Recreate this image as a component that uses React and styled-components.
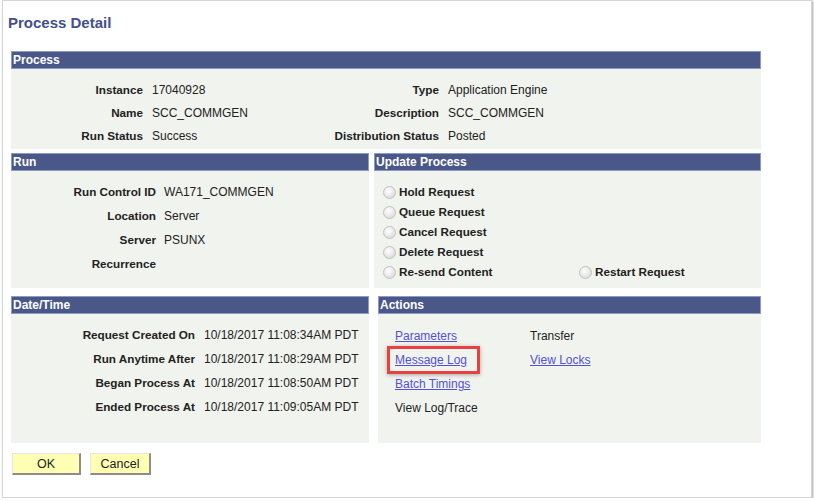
import React from 'react';
import styled, { createGlobalStyle } from 'styled-components';

const GlobalStyle = createGlobalStyle`
  body {
    margin: 0;
    background: #ffffff;
    font-family: "Liberation Sans", Arial, sans-serif;
    font-size: 12px;
    color: #222222;
  }
`;

const Colors = {
  title: '#44508c',
  header: '#4a5889',
  headerBorder: '#8d9ac2',
  body: '#f1f3ee',
  link: '#5451d6',
  text: '#222222',
};

const Frame = styled.div`
  margin-left: 2px;
  width: 810px;
  height: 498px;
  box-sizing: border-box;
  border: 1px solid #d6d6d6;
  box-shadow: 1px 1px 2px rgba(0, 0, 0, 0.35);
  padding-top: 13px;
`;

const Title = styled.h1`
  margin: 0 0 0 5px;
  font-size: 15px;
  line-height: 18px;
  font-weight: bold;
  color: ${Colors.title};
`;

const Main = styled.div`
  width: 750px;
  margin: 19px 0 0 8px;
  display: grid;
  grid-template-columns: 358px 387px;
  column-gap: 5px;
`;

const Section = styled.section`
  grid-column: ${({ $full }) => ($full ? '1 / -1' : 'auto')};
  margin-top: ${({ $gap }) => $gap || 0}px;
  margin-left: ${({ $indent }) => $indent || 0}px;
  display: flex;
  flex-direction: column;
`;

const Header = styled.div`
  height: 18px;
  box-sizing: border-box;
  border: 1px solid ${Colors.headerBorder};
  background: ${Colors.header};
  color: #ffffff;
  font-weight: bold;
  font-size: 12px;
  line-height: 16px;
  padding-left: 1px;
`;

const Body = styled.div`
  height: ${({ $h }) => $h}px;
  background: ${Colors.body};
  box-sizing: border-box;
`;

const FieldGrid = styled.div`
  display: grid;
  grid-template-columns: ${({ $cols }) => $cols};
  grid-auto-rows: ${({ $rowH }) => $rowH}px;
  column-gap: ${({ $colGap }) => $colGap}px;
  padding-top: ${({ $padTop }) => $padTop}px;
  align-items: center;
  line-height: 16px;
`;

const Label = styled.span`
  font-weight: bold;
  font-size: 11.7px;
  text-align: right;
  white-space: nowrap;
`;

const Value = styled.span`
  white-space: nowrap;
`;

const RadioGrid = styled.div`
  display: grid;
  grid-template-columns: 196px 1fr;
  grid-auto-rows: 20px;
  padding: 11px 0 0 9px;
  align-items: center;
`;

const RadioItem = styled.label`
  grid-column: ${({ $col }) => $col || 1};
  display: flex;
  align-items: center;
  gap: 3px;
  font-weight: bold;
  font-size: 11.7px;
  white-space: nowrap;
  line-height: 16px;
`;

const RadioDot = styled.span`
  width: 13px;
  height: 13px;
  box-sizing: border-box;
  border-radius: 50%;
  border: 1px solid #c2c2c2;
  background: radial-gradient(circle at 40% 35%, #ffffff 0%, #eeeeee 40%, #d2d2d2 100%);
`;

const ActionGrid = styled.div`
  display: grid;
  grid-template-columns: 135px 1fr;
  grid-auto-rows: 24px;
  padding: 10px 0 0 17px;
  align-items: center;
  line-height: 16px;
`;

const Link = styled.a`
  color: ${Colors.link};
  text-decoration: underline;
  cursor: pointer;
  justify-self: start;
  white-space: nowrap;
`;

const Highlight = styled.span`
  position: relative;
  justify-self: start;
  display: inline-block;

  &::after {
    content: '';
    position: absolute;
    left: -8px;
    right: -13px;
    top: -6px;
    bottom: -6px;
    border: 3px solid #e8413f;
    box-shadow: 0 1px 4px rgba(0, 0, 0, 0.3);
    pointer-events: none;
  }
`;

const Plain = styled.span`
  white-space: nowrap;
`;

const ButtonRow = styled.div`
  display: flex;
  gap: 9px;
  margin: 10px 0 0 9px;
`;

const Button = styled.button`
  width: ${({ $w }) => $w}px;
  height: 22px;
  box-sizing: border-box;
  background: #ffffb3;
  border-style: solid;
  border-width: 1px 2px 2px 1px;
  border-color: #e6e6e6 #8c8c8c #8c8c8c #e6e6e6;
  font-family: "Liberation Sans", Arial, sans-serif;
  font-size: 12.5px;
  color: #222222;
  padding: 0;
  cursor: pointer;
`;

const processFields = [
  ['Instance', '17040928', 'Type', 'Application Engine'],
  ['Name', 'SCC_COMMGEN', 'Description', 'SCC_COMMGEN'],
  ['Run Status', 'Success', 'Distribution Status', 'Posted'],
];

const runFields = [
  ['Run Control ID', 'WA171_COMMGEN'],
  ['Location', 'Server'],
  ['Server', 'PSUNX'],
  ['Recurrence', ''],
];

const dateFields = [
  ['Request Created On', '10/18/2017 11:08:34AM PDT'],
  ['Run Anytime After', '10/18/2017 11:08:29AM PDT'],
  ['Began Process At', '10/18/2017 11:08:50AM PDT'],
  ['Ended Process At', '10/18/2017 11:09:05AM PDT'],
];

const radios = ['Hold Request', 'Queue Request', 'Cancel Request', 'Delete Request'];

export default function App() {
  return (
    <>
      <GlobalStyle />
      <Frame>
        <Title>Process Detail</Title>
        <Main>
          <Section $full>
            <Header>Process</Header>
            <Body $h={80}>
              <FieldGrid $cols="132px 150px 128px 1fr" $colGap={9} $rowH={23} $padTop={9}>
                {processFields.map(([l1, v1, l2, v2]) => (
                  <React.Fragment key={l1}>
                    <Label>{l1}</Label>
                    <Value>{v1}</Value>
                    <Label>{l2}</Label>
                    <Value>{v2}</Value>
                  </React.Fragment>
                ))}
              </FieldGrid>
            </Body>
          </Section>

          <Section $gap={4}>
            <Header>Run</Header>
            <Body $h={117}>
              <FieldGrid $cols="145px 1fr" $colGap={8} $rowH={24} $padTop={9}>
                {runFields.map(([l, v]) => (
                  <React.Fragment key={l}>
                    <Label>{l}</Label>
                    <Value>{v}</Value>
                  </React.Fragment>
                ))}
              </FieldGrid>
            </Body>
          </Section>

          <Section $gap={4}>
            <Header>Update Process</Header>
            <Body $h={117}>
              <RadioGrid>
                {radios.map((r) => (
                  <RadioItem key={r}>
                    <RadioDot />
                    {r}
                  </RadioItem>
                ))}
                <RadioItem>
                  <RadioDot />
                  Re-send Content
                </RadioItem>
                <RadioItem $col={2}>
                  <RadioDot />
                  Restart Request
                </RadioItem>
              </RadioGrid>
            </Body>
          </Section>

          <Section $gap={8}>
            <Header>Date/Time</Header>
            <Body $h={129}>
              <FieldGrid $cols="184px 1fr" $colGap={9} $rowH={24} $padTop={9}>
                {dateFields.map(([l, v]) => (
                  <React.Fragment key={l}>
                    <Label>{l}</Label>
                    <Value>{v}</Value>
                  </React.Fragment>
                ))}
              </FieldGrid>
            </Body>
          </Section>

          <Section $gap={8} $indent={4}>
            <Header>Actions</Header>
            <Body $h={129}>
              <ActionGrid>
                <Link>Parameters</Link>
                <Plain>Transfer</Plain>
                <Highlight>
                  <Link>Message Log</Link>
                </Highlight>
                <Link>View Locks</Link>
                <Link>Batch Timings</Link>
                <span />
                <Plain>View Log/Trace</Plain>
              </ActionGrid>
            </Body>
          </Section>
        </Main>
        <ButtonRow>
          <Button $w={69}>OK</Button>
          <Button $w={61}>Cancel</Button>
        </ButtonRow>
      </Frame>
    </>
  );
}
